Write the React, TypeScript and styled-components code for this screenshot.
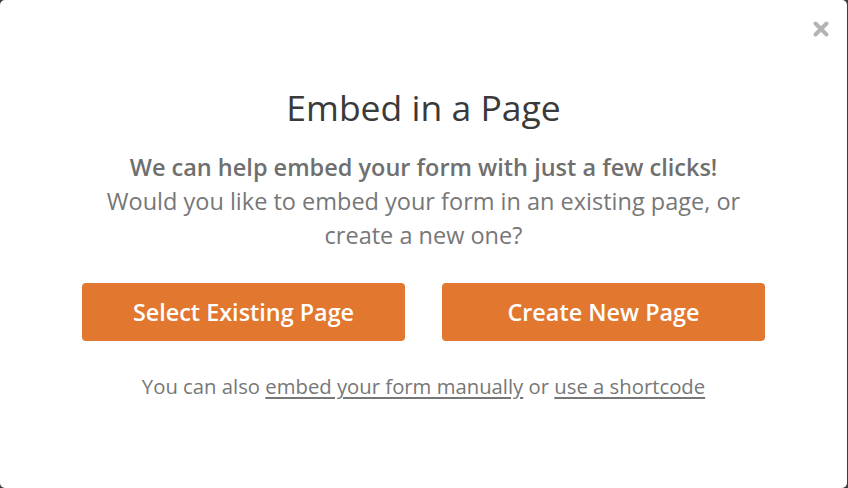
import styled, { createGlobalStyle } from 'styled-components';

const GlobalStyle = createGlobalStyle`
	html, body {
		margin: 0;
		padding: 0;
		background: #3c3c3c;
	}
	body {
		font-family: 'Open Sans', 'Noto Sans', sans-serif;
	}
`;

const Modal = styled.div`
	position: relative;
	box-sizing: border-box;
	width: 847px;
	height: 488px;
	background: #fff;
	border-radius: 5px;
	display: flex;
	flex-direction: column;
	align-items: center;
	padding-top: 82px;
`;

const Close = styled.button`
	position: absolute;
	top: 19px;
	right: 16px;
	width: 20px;
	height: 20px;
	padding: 0;
	border: none;
	background: none;
	cursor: pointer;
`;

const Title = styled.h2`
	margin: 0;
	font-size: 35.5px;
	font-weight: 400;
	line-height: 50px;
	color: #3a3a3a;
`;

const Intro = styled.p`
	margin: 18px 0 0;
	text-align: center;
	font-size: 23.5px;
	line-height: 34px;
	color: #777;
	max-width: 700px;

	strong {
		display: block;
		font-weight: 600;
		color: #6f6f6f;
	}
`;

const Actions = styled.div`
	display: flex;
	gap: 37px;
	margin-top: 31px;
`;

const Button = styled.button`
	width: 323px;
	height: 58px;
	border: none;
	border-radius: 4px;
	background: #e27730;
	color: #fff;
	font-family: inherit;
	font-size: 23.4px;
	font-weight: 600;
	cursor: pointer;
`;

const Footer = styled.p`
	margin: 31px 0 0;
	font-size: 20.3px;
	line-height: 28px;
	color: #777;

	a {
		color: #777;
		text-decoration: underline;
		text-underline-offset: 3px;
	}
`;

export default function App() {
	return (
		<>
			<GlobalStyle />
			<Modal>
				<Close aria-label='Close'>
					<svg width='20' height='20' viewBox='0 0 20 20'>
						<path
							d='M4.5 4.5 L15.5 15.5 M15.5 4.5 L4.5 15.5'
							stroke='#b4b4b4'
							strokeWidth='4'
							strokeLinecap='round'
						/>
					</svg>
				</Close>
				<Title>Embed in a Page</Title>
				<Intro>
					<strong>We can help embed your form with just a few clicks!</strong>
					Would you like to embed your form in an existing page, or create a new one?
				</Intro>
				<Actions>
					<Button>Select Existing Page</Button>
					<Button>Create New Page</Button>
				</Actions>
				<Footer>
					You can also <a href='#'>embed your form manually</a> or{' '}
					<a href='#'>use a shortcode</a>
				</Footer>
			</Modal>
		</>
	);
}
